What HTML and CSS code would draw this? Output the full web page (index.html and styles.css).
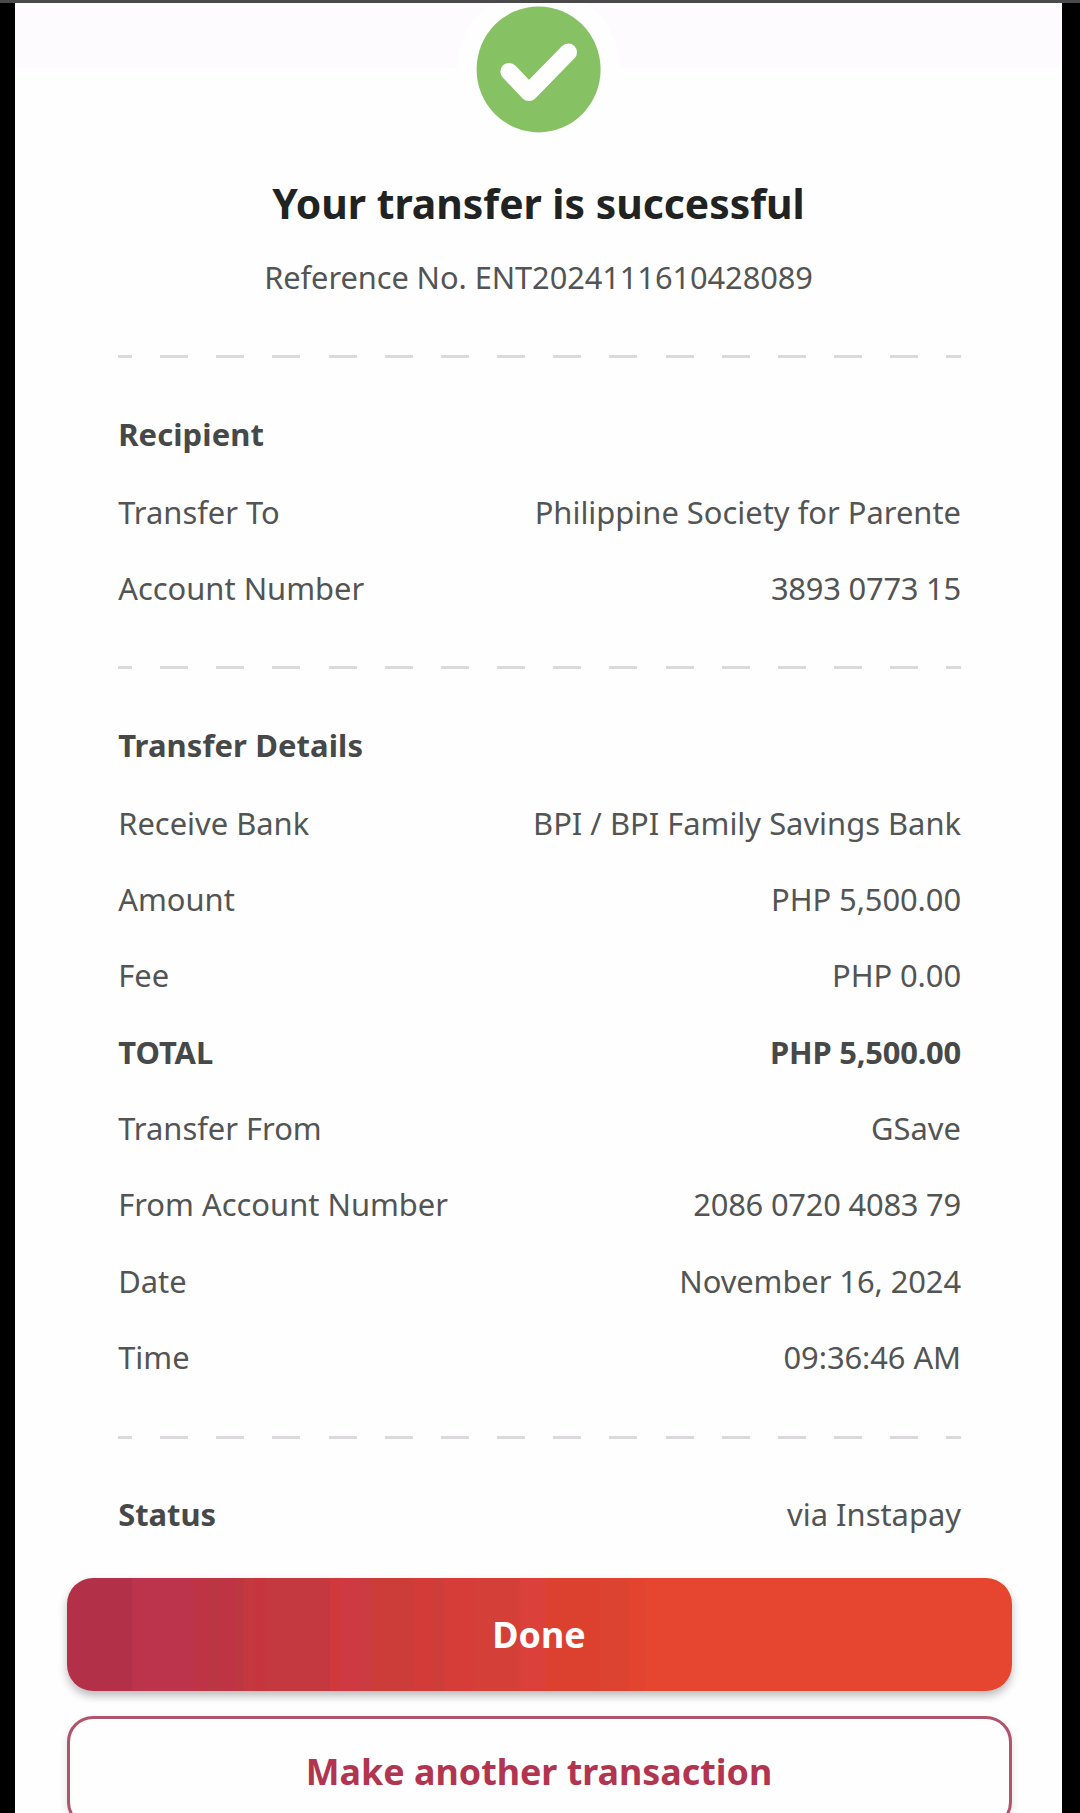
FILE: index.html
```html
<!DOCTYPE html>
<html lang="en">
<head>
<meta charset="utf-8">
<title>Transfer successful</title>
<link rel="stylesheet" href="styles.css">
</head>
<body>
<main class="sheet">
  <header class="hero">
    <svg class="badge" viewBox="0 0 164 164" aria-hidden="true">
      <circle cx="81.6" cy="81.4" r="81.4" fill="#fefefe"/>
      <ellipse cx="81.6" cy="81.4" rx="62" ry="63" fill="#86c263"/>
      <path d="M52.1 83.6 72 104.4 111.3 64.2" fill="none" stroke="#fefefe" stroke-width="17.4" stroke-linecap="round" stroke-linejoin="round"/>
    </svg>
    <h1 class="title">Your transfer is successful</h1>
    <p class="reference">Reference No. ENT2024111610428089</p>
  </header>

  <section class="group">
    <h2 class="heading">Recipient</h2>
    <dl class="rows">
      <div class="row"><dt>Transfer To</dt><dd>Philippine Society for Parente</dd></div>
      <div class="row"><dt>Account Number</dt><dd class="digits">3893 0773 15</dd></div>
    </dl>
  </section>

  <section class="group">
    <h2 class="heading">Transfer Details</h2>
    <dl class="rows">
      <div class="row"><dt>Receive Bank</dt><dd>BPI / BPI Family Savings Bank</dd></div>
      <div class="row"><dt>Amount</dt><dd class="amount">PHP 5,500.00</dd></div>
      <div class="row"><dt>Fee</dt><dd class="amount">PHP 0.00</dd></div>
      <div class="row total"><dt>TOTAL</dt><dd class="digits">PHP 5,500.00</dd></div>
      <div class="row"><dt>Transfer From</dt><dd>GSave</dd></div>
      <div class="row"><dt>From Account Number</dt><dd class="digits">2086 0720 4083 79</dd></div>
      <div class="row"><dt>Date</dt><dd class="amount">November 16, 2024</dd></div>
      <div class="row"><dt>Time</dt><dd class="amount">09:36:46 AM</dd></div>
    </dl>
  </section>

  <section class="group status">
    <dl class="rows">
      <div class="row"><dt>Status</dt><dd>via Instapay</dd></div>
    </dl>
  </section>

  <footer class="actions">
    <button class="button primary" type="button">Done</button>
    <button class="button outline" type="button">Make another transaction</button>
  </footer>
</main>
</body>
</html>
```
FILE: styles.css
```css
* {
  box-sizing: border-box;
  margin: 0;
  padding: 0;
}

body {
  height: 1813px;
  overflow: hidden;
  background: #000;
  border-top: 3px solid #4a4a4a;
  font-family: "Noto Sans", sans-serif;
  font-size: 30.9px;
  color: #535454;
}

.sheet {
  width: 1047px;
  height: 1810px;
  margin-left: 15px;
  overflow: hidden;
  background: linear-gradient(#fefbfe 65px, #fefefe 65px);
}

.hero {
  display: flex;
  flex-direction: column;
  align-items: center;
  height: 352.2px;
}

.badge {
  flex: none;
  width: 164px;
  height: 164px;
  margin-top: -15px;
}

.title {
  margin-top: 23.5px;
  font-size: 40.85px;
  line-height: 54px;
  font-weight: 700;
  color: #212322;
}

.reference {
  margin-top: 26.4px;
  font-size: 30.8px;
  line-height: 42px;
  letter-spacing: -0.07px;
}

.group {
  padding: 0 101px 40.3px 103.2px;
}

/* Dashed rule that opens every group. */
.group::before {
  content: "";
  display: block;
  height: 3px;
  margin-bottom: 37.9px;
  background: repeating-linear-gradient(90deg, #dbd9db 0 14px, transparent 14px 42.15px, #dbd9db 42.15px 56.16px);
}

.heading {
  font-size: 31px;
  line-height: 77.5px;
  font-weight: 700;
  letter-spacing: 0.08px;
  color: #474848;
}

.row {
  display: flex;
  justify-content: space-between;
  line-height: 76.3px;
  white-space: nowrap;
}

.digits {
  letter-spacing: -0.22px;
}

.amount {
  letter-spacing: -0.08px;
}

.total,
.status dt {
  font-weight: 700;
  color: #474848;
}

.status {
  padding-bottom: 25.4px;
}

.actions {
  display: flex;
  flex-direction: column;
  gap: 25px;
  padding: 0 50.5px 0 51.5px;
}

.button {
  flex: none;
  height: 112.6px;
  border: 0;
  border-radius: 26px;
  font: 700 35.85px/109px "Noto Sans", sans-serif;
  box-shadow: 0 5px 9px rgba(40, 40, 40, 0.3);
}

.primary {
  color: #fff;
  background: linear-gradient(90deg,
    #b33049 0 65px, #bc344b 65px 127px, #be3444 128px 140px,
    #bb3643 141px 154px, #bf3444 155px 169px, #bb3840 170px 176px,
    #c4393f 177px 187px, #c6353e 188px 198px, #c4383f 199px 262px,
    #cf393b 263px 271px, #cf3941 273px 292px, #cb3c42 293px 304px,
    #cc3c38 305px 346px, #d33b39 347px 366px, #cc3e3a 367px 376px,
    #d63c38 378px 406px, #d44038 408px 452px, #dc403a 454px 477px,
    #dc4130 480px 532px, #dc4330 534px 560px, #e2442f 563px 575px,
    #e64530 579px);
}

.outline {
  color: #b1354f;
  background: #fefefe;
  border: 3px solid #ae546c;
  line-height: 104px;
  box-shadow: 0 4px 8px rgba(60, 40, 60, 0.14);
}
```
